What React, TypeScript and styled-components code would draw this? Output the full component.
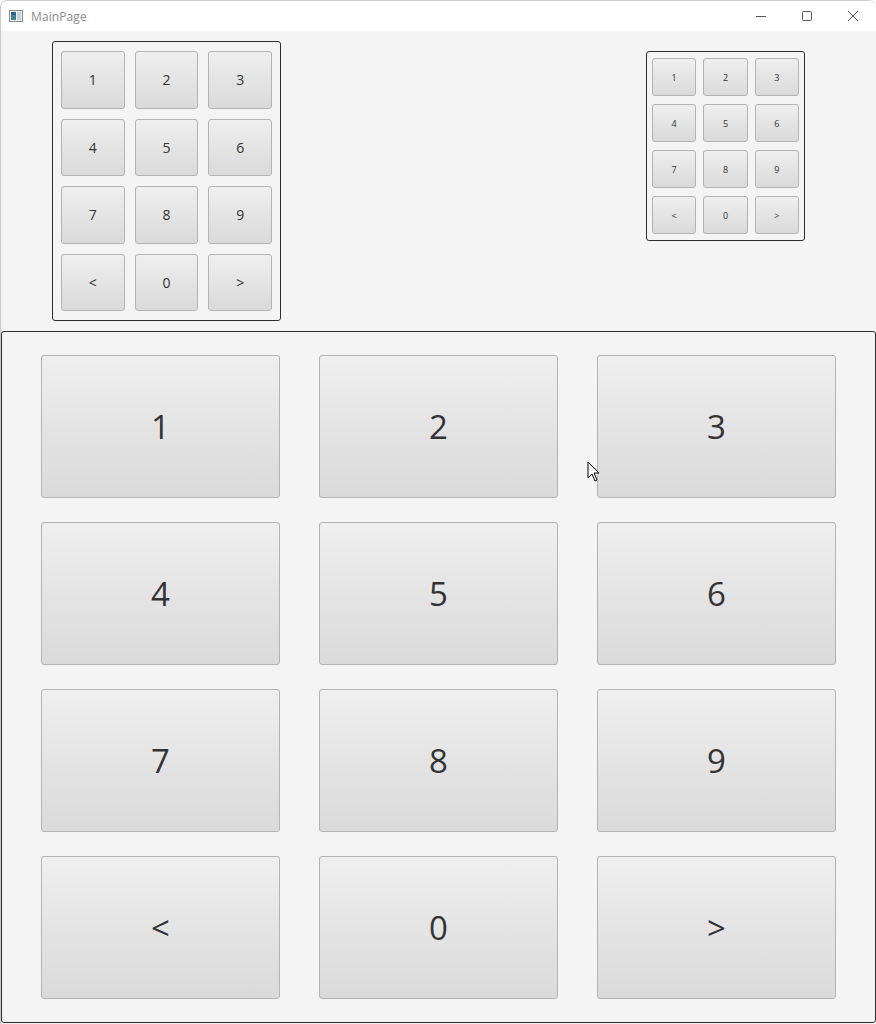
import React from "react";
import styled, { createGlobalStyle } from "styled-components";

const Global = createGlobalStyle`
  html, body { margin: 0; padding: 0; background: #ffffff; }
  body { font-family: "Open Sans", "Noto Sans", sans-serif; }
  * { box-sizing: border-box; }
`;

const Window = styled.div`
  position: relative;
  width: 876px;
  height: 1024px;
  display: flex;
  flex-direction: column;
  background: #f4f4f4;
  border-left: 1px solid #c9c9c9;
  border-top: 1px solid #d0d0d0;
  border-top-left-radius: 7px;
  border-top-right-radius: 7px;
  overflow: hidden;
`;

const TitleBar = styled.div`
  height: 30px;
  flex: none;
  background: #ffffff;
  display: flex;
  align-items: center;
  padding-left: 8px;
`;

const TitleText = styled.span`
  margin-left: 8px;
  font-size: 12px;
  color: #8c8c8c;
  letter-spacing: 0.1px;
`;

const Controls = styled.div`
  margin-left: auto;
  display: flex;
  height: 100%;
`;

const Ctrl = styled.div`
  width: 46px;
  height: 100%;
  display: flex;
  align-items: center;
  justify-content: center;
`;

const TopArea = styled.div`
  height: 300px;
  flex: none;
  display: flex;
  align-items: flex-start;
`;

type PadProps = {
  $cols: number;
  $padV: number;
  $padH: number;
  $gapR: number;
  $gapC: number;
  $w: number;
  $h: number;
};

const Pad = styled.div<PadProps>`
  flex: none;
  width: ${(p) => p.$w}px;
  height: ${(p) => p.$h}px;
  border: 1px solid #2e2e2e;
  border-radius: 3px;
  display: grid;
  grid-template-columns: repeat(3, 1fr);
  grid-template-rows: repeat(4, 1fr);
  row-gap: ${(p) => p.$gapR}px;
  column-gap: ${(p) => p.$gapC}px;
  padding: ${(p) => p.$padV}px ${(p) => p.$padH}px;
`;

const LeftPad = styled(Pad)`
  margin-left: 51px;
  margin-top: 10px;
`;

const RightPad = styled(Pad)`
  margin-left: auto;
  margin-right: 71px;
  margin-top: 20px;
`;

const BigPad = styled(Pad)`
  flex: 1;
  width: auto;
  height: auto;
  margin-bottom: 1px;
`;

const Key = styled.button<{ $size: number }>`
  font-family: "Open Sans", "Noto Sans", sans-serif;
  font-size: ${(p) => p.$size}px;
  color: #333333;
  border: 1px solid #b3b3b3;
  border-radius: 3px;
  background: linear-gradient(to bottom, #efefef 0%, #e4e4e4 50%, #dadada 100%);
  padding: 0;
  margin: 0;
  display: flex;
  align-items: center;
  justify-content: center;
  cursor: default;
  min-width: 0;
  min-height: 0;
`;

const Cursor = styled.svg`
  position: absolute;
  left: 586px;
  top: 460px;
`;

const keys = ["1", "2", "3", "4", "5", "6", "7", "8", "9", "<", "0", ">"];

function Keys({ size }: { size: number }) {
  return (
    <>
      {keys.map((k) => (
        <Key key={k} $size={size}>
          {k}
        </Key>
      ))}
    </>
  );
}

export default function App() {
  return (
    <>
      <Global />
      <Window>
        <TitleBar>
          <svg width="14" height="12" viewBox="0 0 14 12">
            <rect x="0.5" y="0.5" width="13" height="11" fill="#f2f2f2" stroke="#8a8a8a" />
            <rect x="2" y="2" width="5" height="8" fill="#3f7f8c" />
            <rect x="2" y="2" width="5" height="3" fill="#2d5fa0" />
            <rect x="8" y="2" width="4" height="8" fill="#c9d3d6" />
          </svg>
          <TitleText>MainPage</TitleText>
          <Controls>
            <Ctrl>
              <svg width="12" height="12" viewBox="0 0 12 12">
                <line x1="1" y1="6.5" x2="11" y2="6.5" stroke="#555" strokeWidth="1" />
              </svg>
            </Ctrl>
            <Ctrl>
              <svg width="12" height="12" viewBox="0 0 12 12">
                <rect x="1.5" y="1.5" width="9" height="9" rx="1" fill="none" stroke="#555" strokeWidth="1" />
              </svg>
            </Ctrl>
            <Ctrl>
              <svg width="12" height="12" viewBox="0 0 12 12">
                <path d="M1 1 L11 11 M11 1 L1 11" stroke="#555" strokeWidth="1" />
              </svg>
            </Ctrl>
          </Controls>
        </TitleBar>
        <TopArea>
          <LeftPad $cols={3} $w={229} $h={280} $padV={9} $padH={8} $gapR={10} $gapC={10}>
            <Keys size={14} />
          </LeftPad>
          <RightPad $cols={3} $w={159} $h={190} $padV={6} $padH={5} $gapR={8} $gapC={7}>
            <Keys size={9} />
          </RightPad>
        </TopArea>
        <BigPad $cols={3} $w={0} $h={0} $padV={23} $padH={39} $gapR={24} $gapC={39}>
          <Keys size={33} />
        </BigPad>
        <Cursor width="14" height="22" viewBox="0 0 14 22">
          <path d="M1 1 L1 17 L5 13 L8 20 L10 19 L7 12 L12 12 Z" fill="#ffffff" stroke="#000000" strokeWidth="1" strokeLinejoin="round" />
        </Cursor>
      </Window>
    </>
  );
}
